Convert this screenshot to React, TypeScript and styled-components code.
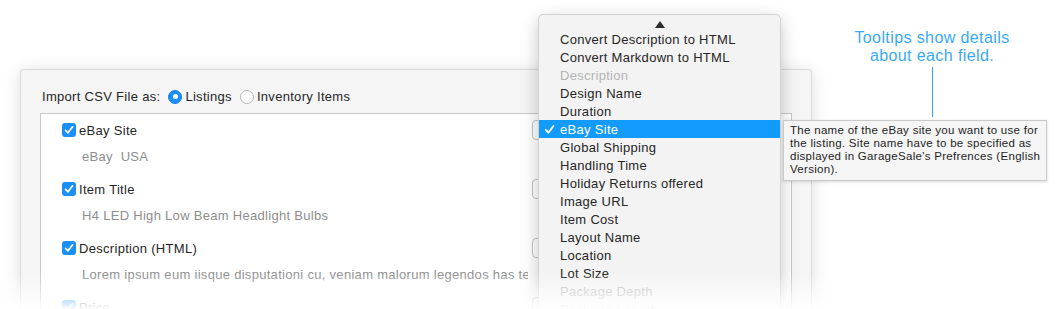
import React from "react";
import styled, { createGlobalStyle } from "styled-components";

const GlobalStyle = createGlobalStyle`
  html, body {
    margin: 0;
    padding: 0;
    background: #ffffff;
  }
  body {
    font-family: "Liberation Sans", Arial, sans-serif;
    -webkit-font-smoothing: antialiased;
  }
`;

interface Field {
  label: string;
  value: string;
}

const fields: Field[] = [
  { label: "eBay Site", value: "eBay  USA" },
  { label: "Item Title", value: "H4 LED High Low Beam Headlight Bulbs" },
  {
    label: "Description (HTML)",
    value:
      "Lorem ipsum eum iisque disputationi cu, veniam malorum legendos has te",
  },
  { label: "Price", value: "29.99" },
];

interface MenuEntry {
  text: string;
  disabled?: boolean;
  selected?: boolean;
}

const menuEntries: MenuEntry[] = [
  { text: "Convert Description to HTML" },
  { text: "Convert Markdown to HTML" },
  { text: "Description", disabled: true },
  { text: "Design Name" },
  { text: "Duration" },
  { text: "eBay Site", selected: true },
  { text: "Global Shipping" },
  { text: "Handling Time" },
  { text: "Holiday Returns offered" },
  { text: "Image URL" },
  { text: "Item Cost" },
  { text: "Layout Name" },
  { text: "Location" },
  { text: "Lot Size" },
  { text: "Package Depth", disabled: true },
  { text: "Package Length", disabled: true },
];

const tooltipLines = [
  "The name of the eBay site you want to use for",
  "the listing. Site name have to be specified as",
  "displayed in GarageSale's Prefrences (English",
  "Version).",
];

const CheckIcon: React.FC<{ size?: number }> = ({ size = 10 }) => (
  <svg width={size} height={size} viewBox="0 0 10 10">
    <path
      d="M1.6 5.3 L4 7.8 L8.6 1.8"
      fill="none"
      stroke="#fff"
      strokeWidth="1.7"
      strokeLinecap="round"
      strokeLinejoin="round"
    />
  </svg>
);

const App: React.FC = () => {
  return (
    <>
      <GlobalStyle />
      <Stage>
        <Window>
          <Header>
            <HeaderLabel>Import CSV File as:</HeaderLabel>
            <Radio checked />
            <RadioLabel>Listings</RadioLabel>
            <Radio />
            <RadioLabel>Inventory Items</RadioLabel>
          </Header>
          <FieldList>
            {fields.map((f) => (
              <FieldRow key={f.label}>
                <FieldHead>
                  <Checkbox>
                    <CheckIcon />
                  </Checkbox>
                  <FieldLabel>{f.label}</FieldLabel>
                  <PopUp />
                </FieldHead>
                <FieldValue>{f.value}</FieldValue>
              </FieldRow>
            ))}
          </FieldList>
        </Window>

        <Menu>
          <ScrollArrow />
          {menuEntries.map((m) => (
            <MenuItem
              key={m.text}
              $disabled={m.disabled}
              $selected={m.selected}
            >
              <MenuCheck>{m.selected && <CheckIcon size={11} />}</MenuCheck>
              {m.text}
            </MenuItem>
          ))}
        </Menu>

        <Tooltip>
          {tooltipLines.map((line) => (
            <TooltipLine key={line}>{line}</TooltipLine>
          ))}
        </Tooltip>

        <Callout>
          <CalloutText>
            Tooltips show details
            <br />
            about each field.
          </CalloutText>
          <CalloutLine />
        </Callout>

        <BottomFade />
      </Stage>
    </>
  );
};

const Stage = styled.div`
  position: relative;
  width: 1063px;
  height: 309px;
  overflow: hidden;
  background: #fff;
  padding: 69px 0 0 20px;
  box-sizing: border-box;
`;

const Window = styled.div`
  width: 792px;
  height: 300px;
  box-sizing: border-box;
  background: #f5f5f5;
  border: 1px solid #dadada;
  border-radius: 3px 3px 0 0;
  box-shadow: 0 2px 18px rgba(0, 0, 0, 0.13);
`;

const Header = styled.div`
  display: flex;
  align-items: center;
  height: 43px;
  box-sizing: border-box;
  padding: 10px 0 0 21px;
  font-size: 13px;
  letter-spacing: 0.3px;
  color: #262626;
`;

const HeaderLabel = styled.span`
  margin-right: 8px;
`;

const Radio = styled.span<{ checked?: boolean }>`
  position: relative;
  display: inline-block;
  width: 14px;
  height: 14px;
  box-sizing: border-box;
  border-radius: 50%;
  margin-right: 3px;
  background: ${(p) => (p.checked ? "#1a8ff6" : "#fff")};
  border: 1px solid ${(p) => (p.checked ? "#1483ea" : "#b5b5b5")};

  &::after {
    content: "";
    display: ${(p) => (p.checked ? "block" : "none")};
    position: absolute;
    left: 3.5px;
    top: 3.5px;
    width: 5px;
    height: 5px;
    border-radius: 50%;
    background: #fff;
  }
`;

const RadioLabel = styled.span`
  margin-right: 8px;
`;

const FieldList = styled.div`
  margin-left: 19px;
  width: 752px;
  height: 260px;
  box-sizing: border-box;
  background: #fff;
  border: 1px solid #c8c8c8;
  padding-top: 7px;
`;

const FieldRow = styled.div`
  height: 59px;
`;

const FieldHead = styled.div`
  display: flex;
  align-items: center;
  height: 18px;
  padding-left: 21px;
  font-size: 13px;
  letter-spacing: 0.3px;
  color: #262626;
`;

const Checkbox = styled.span`
  display: inline-flex;
  align-items: center;
  justify-content: center;
  width: 14px;
  height: 14px;
  border-radius: 3px;
  background: #1a8ff6;
  margin-right: 3px;
`;

const FieldLabel = styled.span`
  flex: 1;
`;

const PopUp = styled.span`
  width: 244px;
  height: 20px;
  margin-right: 15px;
  box-sizing: border-box;
  border: 1px solid #c4c4c4;
  border-radius: 4px;
  background: #fff;
`;

const FieldValue = styled.div`
  margin-top: 9px;
  height: 18px;
  line-height: 18px;
  padding-left: 41px;
  width: 446px;
  font-size: 13px;
  letter-spacing: 0.3px;
  color: #8d8d8d;
  white-space: pre;
  overflow: hidden;
`;

const Menu = styled.div`
  position: absolute;
  left: 538px;
  top: 14px;
  width: 243px;
  height: 330px;
  box-sizing: border-box;
  background: #f3f3f3;
  border: 1px solid #d2d2d2;
  border-radius: 5px;
  box-shadow: 0 6px 18px rgba(0, 0, 0, 0.22);
  padding-top: 15px;
  font-size: 13px;
  letter-spacing: 0.3px;
`;

const ScrollArrow = styled.div`
  position: absolute;
  left: 116px;
  top: 6px;
  width: 0;
  height: 0;
  border-left: 5px solid transparent;
  border-right: 5px solid transparent;
  border-bottom: 7px solid #2c2c2c;
`;

const MenuItem = styled.div<{ $disabled?: boolean; $selected?: boolean }>`
  display: flex;
  align-items: center;
  height: 18px;
  padding-left: 5px;
  white-space: nowrap;
  color: ${(p) =>
    p.$selected ? "#ffffff" : p.$disabled ? "#b3b3b3" : "#262626"};
  background: ${(p) => (p.$selected ? "#139bfc" : "transparent")};
`;

const MenuCheck = styled.span`
  display: inline-flex;
  align-items: center;
  width: 16px;
`;

const Tooltip = styled.div`
  position: absolute;
  left: 783px;
  top: 120px;
  width: 264px;
  box-sizing: border-box;
  padding: 3px 6px 4px;
  background: #f5f5f5;
  border: 1px solid #c9c9c9;
  box-shadow: 0 1px 3px rgba(0, 0, 0, 0.15);
  font-size: 11.5px;
  letter-spacing: 0.3px;
  line-height: 13px;
  color: #1e1e1e;
`;

const TooltipLine = styled.div`
  white-space: nowrap;
`;

const Callout = styled.div`
  position: absolute;
  left: 830px;
  top: 29px;
  width: 204px;
  display: flex;
  flex-direction: column;
  align-items: center;
`;

const CalloutText = styled.div`
  font-size: 16px;
  letter-spacing: 0.4px;
  line-height: 18px;
  text-align: center;
  color: #3aa9f3;
`;

const CalloutLine = styled.div`
  margin-top: 2px;
  width: 1px;
  height: 50px;
  background: #2fa4f2;
`;

const BottomFade = styled.div`
  position: absolute;
  left: 0;
  right: 0;
  bottom: 0;
  height: 36px;
  background: linear-gradient(
    to bottom,
    rgba(255, 255, 255, 0) 0%,
    rgba(255, 255, 255, 0.45) 45%,
    rgba(255, 255, 255, 0.97) 100%
  );
`;

export default App;
